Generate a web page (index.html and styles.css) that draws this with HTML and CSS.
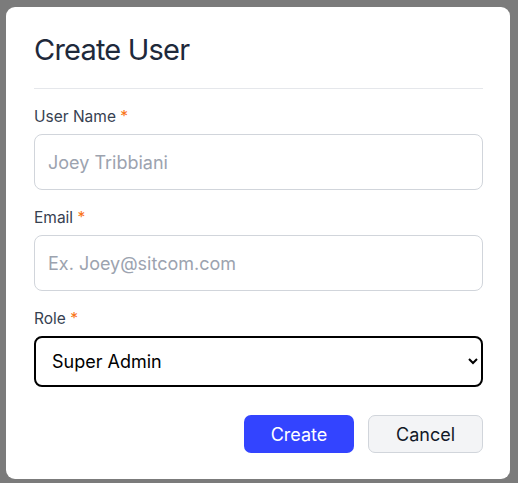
FILE: index.html
```html
<!DOCTYPE html>
<html>
<head>
<meta charset="utf-8">
<link rel="stylesheet" href="styles.css">
</head>
<body>
<div class="modal">
  <h1 class="title">Create User</h1>
  <div class="divider"></div>
  <div class="field">
    <label class="label">User Name <span class="req">*</span></label>
    <input class="input" type="text" placeholder="Joey Tribbiani">
  </div>
  <div class="field">
    <label class="label">Email <span class="req">*</span></label>
    <input class="input" type="text" placeholder="Ex. Joey@sitcom.com">
  </div>
  <div class="field">
    <label class="label">Role <span class="req">*</span></label>
    <select class="select">
      <option>Super Admin</option>
    </select>
  </div>
  <div class="actions">
    <button class="btn btn-primary">Create</button>
    <button class="btn btn-secondary">Cancel</button>
  </div>
</div>
</body>
</html>
```
FILE: styles.css
```css
* { box-sizing: border-box; }
html, body { margin: 0; padding: 0; }
body {
  width: 518px;
  height: 483px;
  background: #7b7b7b;
  font-family: Inter, "Noto Sans", sans-serif;
  overflow: hidden;
}
.modal {
  margin: 7px 0 0 6px;
  width: 504px;
  height: 472px;
  background: #fff;
  border-radius: 9px;
  padding: 25px 27px 0 28px;
  display: flex;
  flex-direction: column;
}
.title {
  margin: 0;
  font-size: 29px;
  line-height: 36px;
  font-weight: 400;
  letter-spacing: -0.8px;
  color: #1e293b;
}
.divider {
  height: 1px;
  background: #e5e7eb;
  margin-top: 20px;
}
.field {
  display: flex;
  flex-direction: column;
  margin-top: 16px;
}
.label {
  font-size: 15.5px;
  line-height: 24px;
  color: #374151;
  margin-bottom: 5px;
}
.req { color: #f97316; }
.input {
  height: 56px;
  border: 1px solid #d1d5db;
  border-radius: 8px;
  padding: 0 13px;
  font-family: Inter, "Noto Sans", sans-serif;
  font-size: 18px;
  color: #111827;
  outline: none;
}
.input::placeholder { color: #9ca3af; }
.select {
  height: 51px;
  border: 2px solid #000;
  border-radius: 8px;
  padding: 0 8px 0 12px;
  font-family: Inter, "Noto Sans", sans-serif;
  font-size: 18px;
  color: #000;
  background: #fff;
}
.actions {
  display: flex;
  justify-content: flex-end;
  gap: 14px;
  margin-top: 28px;
}
.btn {
  height: 38px;
  border-radius: 7px;
  font-family: Inter, "Noto Sans", sans-serif;
  font-size: 18px;
  cursor: pointer;
}
.btn-primary {
  width: 110px;
  background: #3344ff;
  color: #fff;
  border: none;
}
.btn-secondary {
  width: 115px;
  background: #f3f4f6;
  color: #111827;
  border: 1px solid #d1d5db;
}
```
